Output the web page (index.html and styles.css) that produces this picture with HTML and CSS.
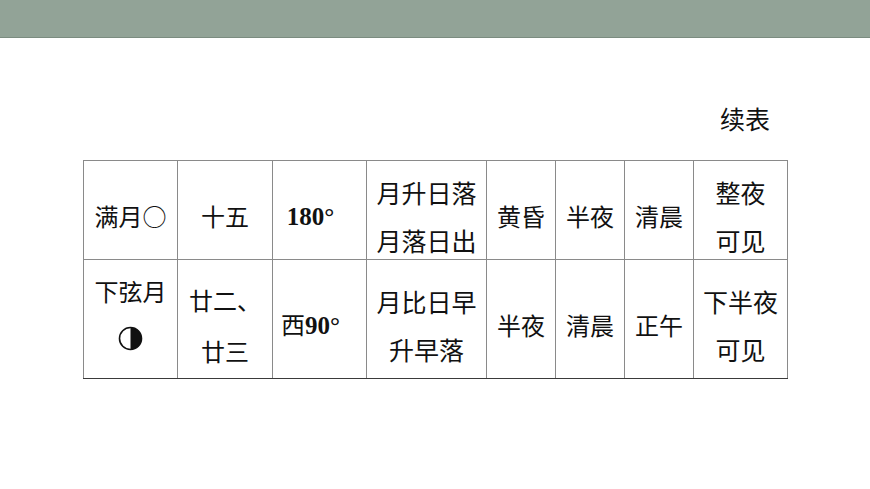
FILE: index.html
```html
<!DOCTYPE html>
<html lang="zh">
<head>
<meta charset="utf-8">
<title>续表</title>
<link rel="stylesheet" href="styles.css">
</head>
<body>
<div class="topbar"></div>
<div class="content">
  <div class="caption">续表</div>
  <table class="moon">
    <colgroup>
      <col class="c1"><col class="c2"><col class="c3"><col class="c4">
      <col class="c5"><col class="c6"><col class="c7"><col class="c8">
    </colgroup>
    <tr class="r1">
      <td>满月○</td>
      <td>十五</td>
      <td class="num"><span class="b">180°</span></td>
      <td class="big"><div class="lines"><span>月升日落</span><span>月落日出</span></div></td>
      <td>黄昏</td>
      <td>半夜</td>
      <td>清晨</td>
      <td class="big"><div class="lines"><span>整夜</span><span>可见</span></div></td>
    </tr>
    <tr class="r2">
      <td class="phase"><div class="lines tight"><span>下弦月</span><span class="icon"><svg class="half" width="25" height="25" viewBox="0 0 25 25"><path d="M12.5 1.5 A11 11 0 0 1 12.5 23.5 Z" fill="#111"/><circle cx="12.5" cy="12.5" r="11" fill="none" stroke="#111" stroke-width="1.6"/></svg></span></div></td>
      <td><div class="lines wide"><span>廿二、</span><span>廿三</span></div></td>
      <td class="num">西<span class="b">90°</span></td>
      <td class="big"><div class="lines"><span>月比日早</span><span>升早落</span></div></td>
      <td>半夜</td>
      <td>清晨</td>
      <td>正午</td>
      <td class="big"><div class="lines"><span>下半夜</span><span>可见</span></div></td>
    </tr>
  </table>
</div>
</body>
</html>
```
FILE: styles.css
```css
html, body {
  margin: 0;
  padding: 0;
  background: #ffffff;
}
body {
  font-family: "Noto Sans CJK SC", "Noto Sans", sans-serif;
  color: #111111;
}
.topbar {
  height: 37px;
  background: #92a397;
  border-bottom: 1px solid #7b8c80;
}
.content {
  width: 704px;
  margin-left: 83px;
}
.caption {
  margin-top: 68px;
  height: 25px;
  line-height: 25px;
  font-size: 25px;
  text-align: right;
  padding-right: 17px;
}
.moon {
  margin-top: 29px;
  width: 704px;
  border-collapse: collapse;
  table-layout: fixed;
  font-size: 24px;
}
.c1 { width: 94px; }
.c2 { width: 95px; }
.c3 { width: 94px; }
.c4 { width: 120px; }
.c5 { width: 69px; }
.c6 { width: 69px; }
.c7 { width: 69px; }
.c8 { width: 94px; }
.moon td {
  border: 1px solid #8a8a8a;
  text-align: center;
  vertical-align: middle;
  padding: 12px 0 0 0;
  line-height: 24px;
  white-space: nowrap;
  overflow: hidden;
}
.r1 td { height: 86px; }
.r2 td { height: 106px; }
.moon tr.r2 td { border-bottom: 1px solid #3a3a3a; }
.moon td.big { font-size: 25px; }
.moon td.num { padding-right: 18px; }
.b {
  font-family: "Liberation Serif", serif;
  font-weight: bold;
  font-size: 25px;
}
.lines {
  display: flex;
  flex-direction: column;
  align-items: center;
  gap: 24px;
}
.lines > span {
  display: block;
  height: 24px;
  line-height: 24px;
}
.lines.wide { gap: 27px; }
.lines.tight { gap: 23px; }
.moon td.phase {
  vertical-align: top;
  padding-top: 19px;
  height: 99px;
}
.icon {
  display: flex;
  align-items: center;
  justify-content: center;
}
.half {
  display: block;
}
```
